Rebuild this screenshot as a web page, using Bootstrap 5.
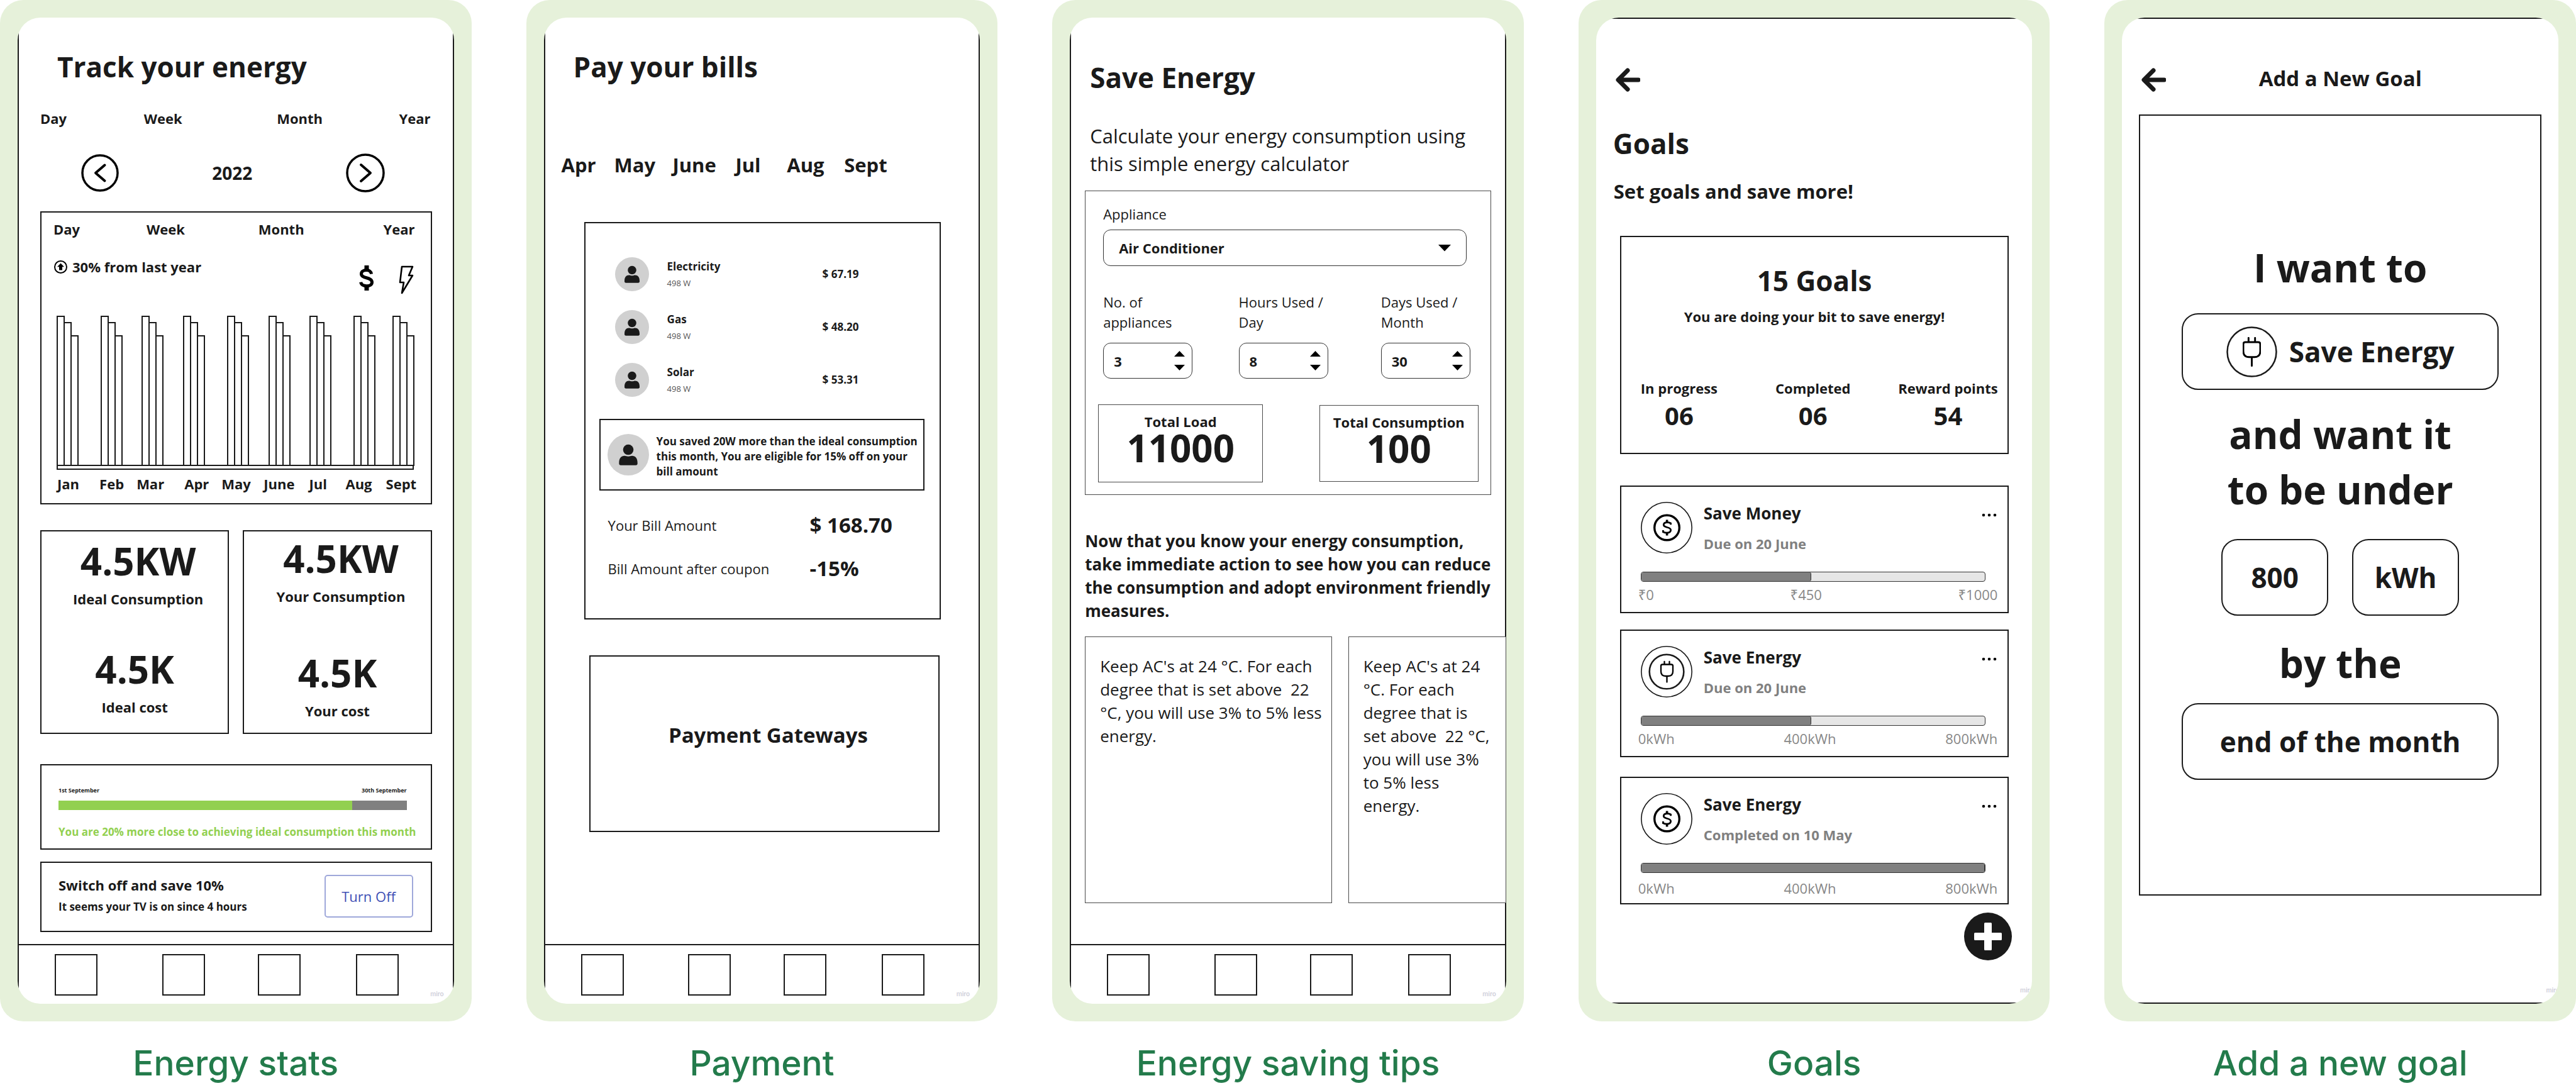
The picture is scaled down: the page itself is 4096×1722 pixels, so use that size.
<!DOCTYPE html>
<html lang="en">
<head>
<meta charset="utf-8">
<meta name="viewport" content="width=device-width, initial-scale=1">
<title>Energy app wireframes</title>
<link href="https://cdn.jsdelivr.net/npm/bootstrap@5.3.0/dist/css/bootstrap.min.css" rel="stylesheet">
<style>
  :root { --ink: #1a1a1a; --leaf: #92d050; --frame: #e6f1da; --brand: #237b4b; --mute: #808080; }
  body { font-family: "Open Sans", "Noto Sans", sans-serif; color: var(--ink); background: #fff; font-size: 22px; line-height: 32px; }
  a { color: inherit; text-decoration: none; }
  button { color: inherit; background: none; border: 0; padding: 0; }
  svg { display: block; flex: none; }

  /* board */
  .board { gap: 87px; }
  .phone-col { flex: 1 1 0; min-width: 0; margin: 0; }
  .phone { background: var(--frame); border-radius: 37px; padding: 28px; }
  .screen { background: #fff; border-radius: 36px; overflow: hidden; }
  .screen-sides { border-left: 2px solid var(--ink); border-right: 2px solid var(--ink); }
  .screen-ends { border-top: 2px solid var(--ink); border-bottom: 2px solid var(--ink); }
  .caption-text { font-family: Inter, sans-serif; font-weight: 500; font-size: 55px; line-height: 64px; color: var(--brand); margin-top: 34px; white-space: nowrap; }

  /* type scale */
  .t-62 { font-size: 62px; line-height: 88px; font-weight: 700; margin: 0; }
  .t-60 { font-size: 60px; line-height: 60px; font-weight: 700; }
  .t-44 { font-size: 44px; line-height: 60px; font-weight: 700; margin: 0; }
  .t-40 { font-size: 40px; line-height: 48px; font-weight: 700; }
  .t-33 { font-size: 33px; line-height: 44px; font-weight: 700; margin: 0; }
  .t-31 { font-size: 31px; line-height: 44px; margin: 0; }
  .t-28 { font-size: 28px; line-height: 40px; }
  .t-26 { font-size: 26px; line-height: 37px; margin: 0; }
  .t-22 { font-size: 22px; line-height: 32px; margin: 0; }
  .t-17 { font-size: 17px; line-height: 24px; margin: 0; }
  .t-13 { font-size: 13px; line-height: 20px; }
  .t-9 { font-size: 9px; line-height: 12px; }
  .nowrap { white-space: nowrap; }
  .muted { color: var(--mute); }
  .boxed { border: 2px solid var(--ink); background: #fff; }
  .boxed-thin { border: 1px solid #4a4a4a; background: #fff; }

  /* bottom tab bar */
  .tabbar { border-top: 2px solid var(--ink); padding: 14px 86px 13px 57px; display: grid; grid-template-columns: 171fr 152fr 156fr 68fr; position: relative; margin-top: auto; }
  .tabbar a { width: 68px; height: 66px; border: 2px solid var(--ink); display: block; }
  .stamp { position: absolute; right: 14px; bottom: 10px; font: 600 10px/12px Inter, sans-serif; color: #cfcfda; }
  .stamp-low { right: -2px; bottom: 14px; }

  /* energy stats */
  .stats-title { margin-top: 48px; padding-left: 61px; }
  .range-tabs { display: grid; grid-template-columns: 165fr 212fr 245fr; padding: 0 35px 0 34px; margin-top: 36px; }
  .pager { margin-top: 40px; padding: 0 108px 0 99px; }
  .chart-card { margin: 30px 33px 0 34px; padding: 10px 0 15px; }
  .chart-tabs { display: grid; grid-template-columns: 148fr 178fr 249fr; padding: 0 25px 0 19px; }
  .range-tabs > :last-child, .chart-tabs > :last-child { display: flex; justify-content: space-between; }
  .chart-head { margin-top: 28px; padding: 0 27px 0 20px; height: 60px; }
  .chart-head-icons { gap: 39px; padding-top: 14px; }
  .bars { display: grid; grid-template-columns: 70fr 65fr 66fr 70fr 66fr 65fr 70fr 62fr 34fr; height: 239px; margin: 34px 27px 0 24px; }
  .bar-group i { width: 13px; border: 2px solid var(--ink); margin-right: -2px; background: #fff; }
  .bars-base { height: 8px; margin: -2px 27px 0 24px; border: 2px solid var(--ink); }
  .bar-labels { display: grid; grid-template-columns: 67fr 59fr 76fr 59fr 67fr 72fr 58fr 64fr 50fr; margin: 6px 21px 0 25px; }
  .stat-pair { gap: 22px; margin: 41px 33px 0 34px; }
  .stat-tile { flex: 1 1 0; }
  .stat-tile .label-line { margin-top: 14px; }
  .stat-tile .top-pair { padding-left: 11px; }
  .tile-ideal { padding: 17px 0 25px; } .tile-ideal .low-pair { margin-top: 66px; }
  .tile-yours { padding: 13px 0 19px; } .tile-yours .low-pair { margin-top: 76px; }
  .month-card { margin: 48px 33px 0 34px; padding: 34px 38px 14px 27px; }
  .month-bar { height: 15px; margin-top: 10px; background: var(--mute); border-radius: 0; }
  .month-bar .progress-bar { background: var(--leaf); }
  .month-note { color: var(--leaf); margin-top: 23px; }
  .switch-card { margin: 19px 33px 18px 34px; padding: 19px 28px 21px 27px; }
  .switch-card .t-17 { margin-top: 7px; }
  .btn-off { width: 141px; height: 68px; border: 2px solid #9fa8da; border-radius: 5px; color: #4050b5; font-size: 22px; }

  /* payment */
  .pay-title { margin-top: 48px; padding-left: 45px; }
  .month-tabs { display: grid; grid-template-columns: 84fr 93fr 100fr 82fr 91fr 70fr; margin: 104px 144px 0 26px; }
  .bill-card { margin: 69px 60px 0 62px; padding: 54px 0 57px; }
  .bill-list { padding-left: 47px; gap: 30px; }
  .bill-item { gap: 29px; }
  .bill-name { width: 247px; }
  .bill-name .t-13 { margin-top: 4px; color: #555; }
  .saved-note { margin: 35px 24px 0 22px; height: 114px; padding-left: 11px; gap: 12px; }
  .saved-note p { padding-top: 6px; }
  .bill-total { padding-left: 36px; }
  .bill-due { margin-top: 33px; }
  .bill-after { margin-top: 25px; }
  .bill-total dt { width: 321px; font-weight: 400; }
  .gateway-card { margin: 57px 62px 0 70px; height: 281px; padding: 0 0 27px 12px; }

  /* saving tips */
  .tips-title { margin-top: 65px; padding-left: 30px; }
  .tips-intro { margin-top: 41px; padding-left: 30px; }
  .calc-card { margin: 21px 22px 0; padding: 20px 0 19px; }
  .calc-fields { padding: 0 32px 0 28px; }
  .pick { position: relative; margin: 9px 6px 0 0; }
  .pick select { appearance: none; width: 100%; height: 58px; border: 1px solid #333; border-radius: 12px; background: #fff; color: var(--ink); font-weight: 700; padding: 0 20px 0 24px; }
  .pick svg { position: absolute; right: 25px; top: 24px; pointer-events: none; }
  .count-grid { display: grid; grid-template-columns: 216fr 227fr 142fr; margin-top: 41px; }
  .count-box { width: 142px; height: 57px; margin-top: 17px; border: 1px solid #333; border-radius: 12px; padding: 0 11px 0 16px; }
  .count-box input { appearance: textfield; -moz-appearance: textfield; border: 0; outline: 0; padding: 0; width: 60px; font-weight: 700; color: var(--ink); background: none; }
  .count-box input::-webkit-inner-spin-button { appearance: none; margin: 0; }
  .totals { margin-top: 41px; padding: 0 19px 0 20px; }
  .total-box { width: 262px; padding: 10px 0 28px; }
  .total-box + .total-box { width: 253px; padding-bottom: 26px; }
  .total-box .t-60 { line-height: 52px; }
  .tips-call { margin-top: 55px; padding-left: 22px; }
  .tip-row { gap: 26px; margin: 22px -2px 0 22px; }
  .tip-card { flex: 355 1 0; height: 424px; padding: 28px 14px 0 23px; }
  .tip-card + .tip-card { flex-grow: 205; padding-right: 22px; }

  /* goals */
  .back-link { display: block; width: 39px; }
  .goals-back { margin: 78px 0 0 31px; }
  .goals-title { margin-top: 52px; padding-left: 27px; }
  .goals-sub { margin-top: 24px; padding-left: 28px; }
  .goals-card { margin: 49px 37px 0 38px; padding: 39px 0 35px; }
  .goals-card > .t-22 { margin-top: 11px; }
  .goal-counts { display: grid; grid-template-columns: 214fr 195fr 160fr; justify-items: start; margin-top: 82px; padding: 0 14px 0 31px; }
  .goal-counts .t-40 { margin-top: 4px; }
  .goal-item { margin: 26px 37px 0 38px; padding: 24px 0 12px; }
  .goal-item.first-goal { margin-top: 50px; }
  .goal-item.done-goal { margin-top: 31px; padding-bottom: 8px; }
  .goal-head { gap: 18px; padding: 0 17px 0 31px; }
  .goal-head .due-line { margin-top: 13px; }
  .goal-more { margin-top: 18px; }
  .goal-bar { height: 16px; margin: 29px 35px 0 31px; background: #e6e6e6; border: 1px solid #333; border-radius: 4px; }
  .goal-bar .progress-bar { background: var(--mute); border-right: 1px solid #333; border-radius: 0 3px 3px 0; }
  .goal-scale { margin-top: 4px; padding: 0 16px 0 27px; color: #888; }
  .done-goal .goal-scale { margin-top: 8px; }
  .fab { margin: 13px 32px 0 auto; }

  /* new goal */
  .new-head { margin-top: 73px; padding: 0 70px 0 31px; }
  .new-head h2 { padding-bottom: 4px; }
  .new-card { margin: 31px 27px 0; padding: 197px 66px 182px; }
  .pill { height: 122px; border: 2px solid var(--ink); border-radius: 26px; background: #fff; width: 100%; color: var(--ink); }
  .pill-kind { margin-top: 29px; gap: 19px; }
  .limit-text { margin-top: 26px; }
  .limit-row { margin-top: 35px; gap: 38px; }
  .limit-row .pill { width: 170px; }
  .by-text { margin-top: 31px; }
  .pill-when { margin-top: 20px; }
</style>
</head>
<body>
<svg width="0" height="0" class="position-absolute" aria-hidden="true">
  <symbol id="person" viewBox="0 0 54 54">
    <circle cx="27" cy="27" r="27" fill="#d0d0d0"/>
    <circle cx="27" cy="20.500" r="6.800" fill="#1a1a1a"/>
    <path d="M15 37.500c0-6 3-9 7-9 2 0 3 .8 5 .8s3-.8 5-.8c4 0 7 3 7 9v1c0 1.400-.8 2.200-2.200 2.200H17.200c-1.400 0-2.200-.8-2.200-2.200z" fill="#1a1a1a"/>
  </symbol>
  <symbol id="back" viewBox="0 0 39 38">
    <path d="M19 4L4 19l15 15M4.500 19H36" fill="none" stroke="#1a1a1a" stroke-width="7" stroke-linecap="round" stroke-linejoin="round"/>
  </symbol>
  <symbol id="plug" viewBox="0 0 28 46">
    <path d="M4 8h20q3 0 3 3v11q0 9-9 9h-8q-9 0-9-9V11q0-3 3-3zM9 1.500v6.500M19 1.500v6.500M14 31v13.500" fill="none" stroke="#000" stroke-width="2.800" stroke-linecap="round" stroke-linejoin="round"/>
  </symbol>
  <symbol id="coin" viewBox="0 0 82 82">
    <circle cx="41" cy="41" r="40.200" fill="#fff" stroke="#1a1a1a" stroke-width="1.600"/>
    <circle cx="41.500" cy="41" r="19.800" fill="none" stroke="#000" stroke-width="3.400"/>
    <path d="M47.600 36.200V34c-1.800-.9-3.600-1.300-5.600-1.300-3.700 0-5.700 1.500-5.700 3.900 0 5.200 11.300 2.600 11.300 8.200 0 2.700-2.200 4.400-6.200 4.400-2.200 0-4.300-.5-6-1.400V45" fill="none" stroke="#000" stroke-width="2.800"/>
    <path d="M39.800 28.500h3.600v4h-3.600zM39.800 49.500h3.600v4h-3.600z"/>
  </symbol>
  <symbol id="plugcoin" viewBox="0 0 82 82">
    <circle cx="41" cy="41" r="40.200" fill="#fff" stroke="#1a1a1a" stroke-width="1.600"/>
    <circle cx="41" cy="41" r="27.300" fill="none" stroke="#1a1a1a" stroke-width="2.600"/>
    <path d="M34.500 29.500h14q2.500 0 2.500 2.500v8.500q0 7.500-7.500 7.500h-4q-7.500 0-7.500-7.500V32q0-2.500 2.500-2.500zM37.500 25v4M45.500 25v4M41.500 48v9.500" fill="none" stroke="#000" stroke-width="2.300" stroke-linecap="round"/>
  </symbol>
  <symbol id="dots" viewBox="0 0 24 6">
    <circle cx="3" cy="3" r="2.300"/><circle cx="12" cy="3" r="2.300"/><circle cx="21" cy="3" r="2.300"/>
  </symbol>
  <symbol id="steps" viewBox="0 0 17 32">
    <path d="M8.500 0L17 9H0zM0 22h17l-8.500 9z" fill="#000"/>
  </symbol>
</svg>

<main class="board d-flex min-vh-100">

  <!-- Energy stats -->
  <figure class="phone-col d-flex flex-column">
    <div class="phone flex-grow-1 d-flex flex-column">
      <div class="screen flex-grow-1 d-flex flex-column">
        <section class="screen-sides flex-grow-1 d-flex flex-column">
          <h2 class="t-44 stats-title">Track your energy</h2>
          <nav class="range-tabs fw-bold" aria-label="Range">
            <a href="#">Day</a><a href="#">Week</a><span><a href="#">Month</a><a href="#">Year</a></span>
          </nav>
          <div class="pager d-flex justify-content-between align-items-center">
            <button type="button" aria-label="Previous year"><svg width="60" height="60" viewBox="0 0 60 60"><circle cx="30" cy="30" r="28" fill="none" stroke="#000" stroke-width="3.500"/><path d="M37.500 17.500L23 30l14.500 12.500" fill="none" stroke="#000" stroke-width="4" stroke-linecap="round" stroke-linejoin="round"/></svg></button>
            <span class="t-28 fw-bold">2022</span>
            <button type="button" aria-label="Next year"><svg width="62" height="62" viewBox="0 0 62 62"><circle cx="31" cy="31" r="29" fill="none" stroke="#000" stroke-width="3.500"/><path d="M24 18l15 13-15 13" fill="none" stroke="#000" stroke-width="4" stroke-linecap="round" stroke-linejoin="round"/></svg></button>
          </div>
          <div class="boxed chart-card">
            <nav class="chart-tabs fw-bold" aria-label="Chart range">
              <a href="#">Day</a><a href="#">Week</a><span><a href="#">Month</a><a href="#">Year</a></span>
            </nav>
            <div class="chart-head d-flex justify-content-between align-items-start">
              <div class="d-flex align-items-center gap-2">
                <svg width="21" height="21" viewBox="0 0 21 21"><circle cx="10.500" cy="10.500" r="9.500" fill="none" stroke="#000" stroke-width="2"/><path d="M10.500 4.500l5.500 5.700h-3v5.300H8v-5.300H5z"/></svg>
                <strong>30% from last year</strong>
              </div>
              <div class="chart-head-icons d-flex">
                <svg width="24" height="40" viewBox="0 0 24 40"><path d="M19.600 13.600C19 10 16 7.600 12 7.600c-5 0-8.500 2.200-8.500 5.900C3.500 21.500 20.500 18 20.500 26.700c0 3.800-3.500 6-8.500 6s-8.800-2.300-9.300-6" fill="none" stroke="#000" stroke-width="5"/><path d="M8.500 0h7v7h-7zM8.500 33h7v7h-7z"/></svg>
                <svg width="24" height="46" viewBox="0 0 24 46"><path d="M5 2h17l-6 14h6L5 44l3-17H2z" fill="none" stroke="#000" stroke-width="2.600" stroke-linejoin="round"/></svg>
              </div>
            </div>
            <div class="bars" role="img" aria-label="Monthly energy use">
              <div class="bar-group d-flex align-items-end"><i style="height:100%"></i><i style="height:96%"></i><i style="height:87%"></i></div>
              <div class="bar-group d-flex align-items-end"><i style="height:100%"></i><i style="height:96%"></i><i style="height:87%"></i></div>
              <div class="bar-group d-flex align-items-end"><i style="height:100%"></i><i style="height:96%"></i><i style="height:87%"></i></div>
              <div class="bar-group d-flex align-items-end"><i style="height:100%"></i><i style="height:96%"></i><i style="height:87%"></i></div>
              <div class="bar-group d-flex align-items-end"><i style="height:100%"></i><i style="height:96%"></i><i style="height:87%"></i></div>
              <div class="bar-group d-flex align-items-end"><i style="height:100%"></i><i style="height:96%"></i><i style="height:87%"></i></div>
              <div class="bar-group d-flex align-items-end"><i style="height:100%"></i><i style="height:96%"></i><i style="height:87%"></i></div>
              <div class="bar-group d-flex align-items-end"><i style="height:100%"></i><i style="height:96%"></i><i style="height:87%"></i></div>
              <div class="bar-group d-flex align-items-end"><i style="height:100%"></i><i style="height:96%"></i><i style="height:87%"></i></div>
            </div>
            <div class="bars-base"></div>
            <div class="bar-labels fw-bold">
              <span>Jan</span><span>Feb</span><span>Mar</span><span>Apr</span><span>May</span><span>June</span><span>Jul</span><span>Aug</span><span>Sept</span>
            </div>
          </div>
          <div class="stat-pair d-flex text-center fw-bold">
            <div class="boxed stat-tile tile-ideal">
              <div class="top-pair"><div class="t-60">4.5KW</div><div class="label-line">Ideal Consumption</div></div>
              <div class="low-pair"><div class="t-60">4.5K</div><div class="label-line">Ideal cost</div></div>
            </div>
            <div class="boxed stat-tile tile-yours">
              <div class="top-pair"><div class="t-60">4.5KW</div><div class="label-line">Your Consumption</div></div>
              <div class="low-pair"><div class="t-60">4.5K</div><div class="label-line">Your cost</div></div>
            </div>
          </div>
          <div class="boxed month-card">
            <div class="d-flex justify-content-between t-9 fw-bold"><span>1st September</span><span>30th September</span></div>
            <div class="progress month-bar" role="progressbar" aria-label="Month progress" aria-valuenow="84" aria-valuemin="0" aria-valuemax="100"><div class="progress-bar" style="width:84.3%"></div></div>
            <p class="t-17 fw-bold month-note nowrap">You are 20% more close to achieving ideal consumption this month</p>
          </div>
          <div class="boxed switch-card d-flex justify-content-between align-items-start">
            <div class="fw-bold"><div>Switch off and save 10%</div><div class="t-17">It seems your TV is on since 4 hours</div></div>
            <button type="button" class="btn-off">Turn Off</button>
          </div>
          <nav class="tabbar" aria-label="Main"><a href="#" aria-label="Tab 1"></a><a href="#" aria-label="Tab 2"></a><a href="#" aria-label="Tab 3"></a><a href="#" aria-label="Tab 4"></a><span class="stamp">miro</span></nav>
        </section>
      </div>
    </div>
    <figcaption class="caption-text text-center">Energy stats</figcaption>
  </figure>

  <!-- Payment -->
  <figure class="phone-col d-flex flex-column">
    <div class="phone flex-grow-1 d-flex flex-column">
      <div class="screen flex-grow-1 d-flex flex-column">
        <section class="screen-sides flex-grow-1 d-flex flex-column">
          <h2 class="t-44 pay-title">Pay your bills</h2>
          <nav class="month-tabs t-31 fw-bold" aria-label="Month">
            <a href="#">Apr</a><a href="#">May</a><a href="#">June</a><a href="#">Jul</a><a href="#">Aug</a><a href="#">Sept</a>
          </nav>
          <div class="boxed bill-card">
            <div class="bill-list d-flex flex-column">
              <div class="bill-item d-flex align-items-center"><svg width="54" height="54"><use href="#person"/></svg><div class="d-flex align-items-center"><div class="bill-name"><div class="t-17 fw-bold">Electricity</div><div class="t-13">498 W</div></div><strong class="t-17">$ 67.19</strong></div></div>
              <div class="bill-item d-flex align-items-center"><svg width="54" height="54"><use href="#person"/></svg><div class="d-flex align-items-center"><div class="bill-name"><div class="t-17 fw-bold">Gas</div><div class="t-13">498 W</div></div><strong class="t-17">$ 48.20</strong></div></div>
              <div class="bill-item d-flex align-items-center"><svg width="54" height="54"><use href="#person"/></svg><div class="d-flex align-items-center"><div class="bill-name"><div class="t-17 fw-bold">Solar</div><div class="t-13">498 W</div></div><strong class="t-17">$ 53.31</strong></div></div>
            </div>
            <div class="boxed saved-note d-flex align-items-center">
              <svg width="66" height="66"><use href="#person"/></svg>
              <p class="t-17 fw-bold nowrap">You saved 20W more than the ideal consumption<br>this month, You are eligible for 15% off on your<br>bill amount</p>
            </div>
            <dl class="mb-0">
              <div class="bill-total bill-due d-flex align-items-center"><dt>Your Bill Amount</dt><dd class="t-33">$ 168.70</dd></div>
              <div class="bill-total bill-after d-flex align-items-center"><dt>Bill Amount after coupon</dt><dd class="t-33">-15%</dd></div>
            </dl>
          </div>
          <div class="boxed gateway-card d-flex align-items-center justify-content-center"><h3 class="t-33">Payment Gateways</h3></div>
          <nav class="tabbar" aria-label="Main"><a href="#" aria-label="Tab 1"></a><a href="#" aria-label="Tab 2"></a><a href="#" aria-label="Tab 3"></a><a href="#" aria-label="Tab 4"></a><span class="stamp">miro</span></nav>
        </section>
      </div>
    </div>
    <figcaption class="caption-text text-center">Payment</figcaption>
  </figure>

  <!-- Energy saving tips -->
  <figure class="phone-col d-flex flex-column">
    <div class="phone flex-grow-1 d-flex flex-column">
      <div class="screen flex-grow-1 d-flex flex-column">
        <section class="screen-sides flex-grow-1 d-flex flex-column">
          <h2 class="t-44 tips-title">Save Energy</h2>
          <p class="t-31 tips-intro nowrap">Calculate your energy consumption using<br>this simple energy calculator</p>
          <form class="boxed-thin calc-card">
            <div class="calc-fields">
              <label for="appliance" class="d-block">Appliance</label>
              <div class="pick"><select id="appliance"><option>Air Conditioner</option></select><svg width="20" height="11" viewBox="0 0 20 11"><path d="M0 0h20L10 10.500z"/></svg></div>
              <div class="count-grid">
                <div><label for="num" class="d-block">No. of<br>appliances</label><div class="count-box d-flex align-items-center justify-content-between"><input id="num" type="number" value="3"><svg width="17" height="32"><use href="#steps"/></svg></div></div>
                <div><label for="hrs" class="d-block">Hours Used /<br>Day</label><div class="count-box d-flex align-items-center justify-content-between"><input id="hrs" type="number" value="8"><svg width="17" height="32"><use href="#steps"/></svg></div></div>
                <div><label for="dys" class="d-block">Days Used /<br>Month</label><div class="count-box d-flex align-items-center justify-content-between"><input id="dys" type="number" value="30"><svg width="17" height="32"><use href="#steps"/></svg></div></div>
              </div>
            </div>
            <div class="totals d-flex justify-content-between align-items-center text-center fw-bold">
              <div class="boxed-thin total-box"><div>Total Load</div><div class="t-60">11000</div></div>
              <div class="boxed-thin total-box"><div>Total Consumption</div><div class="t-60">100</div></div>
            </div>
          </form>
          <p class="t-26 fw-bold tips-call nowrap">Now that you know your energy consumption,<br>take immediate action to see how you can reduce<br>the consumption and adopt environment friendly<br>measures.</p>
          <div class="tip-row d-flex">
            <div class="boxed-thin tip-card t-26">Keep AC's at 24 °C. For each degree that is set above&nbsp; 22 °C, you will use 3% to 5% less energy.</div>
            <div class="boxed-thin tip-card t-26">Keep AC's at 24 °C. For each degree that is set above&nbsp; 22 °C, you will use 3% to 5% less energy.</div>
          </div>
          <nav class="tabbar" aria-label="Main"><a href="#" aria-label="Tab 1"></a><a href="#" aria-label="Tab 2"></a><a href="#" aria-label="Tab 3"></a><a href="#" aria-label="Tab 4"></a><span class="stamp">miro</span></nav>
        </section>
      </div>
    </div>
    <figcaption class="caption-text text-center">Energy saving tips</figcaption>
  </figure>

  <!-- Goals -->
  <figure class="phone-col d-flex flex-column">
    <div class="phone flex-grow-1 d-flex flex-column">
      <div class="screen flex-grow-1 d-flex flex-column">
        <section class="screen-ends flex-grow-1 d-flex flex-column position-relative">
          <a href="#" class="back-link goals-back" aria-label="Back"><svg width="39" height="38"><use href="#back"/></svg></a>
          <h2 class="t-44 goals-title">Goals</h2>
          <p class="t-31 fw-bold goals-sub">Set goals and save more!</p>
          <div class="boxed goals-card text-center fw-bold">
            <div class="t-44">15 Goals</div>
            <p class="t-22">You are doing your bit to save energy!</p>
            <div class="goal-counts">
              <div><div>In progress</div><div class="t-40">06</div></div>
              <div><div>Completed</div><div class="t-40">06</div></div>
              <div><div>Reward points</div><div class="t-40">54</div></div>
            </div>
          </div>
          <article class="boxed goal-item first-goal">
            <div class="goal-head d-flex align-items-start"><svg width="82" height="82"><use href="#coin"/></svg><div class="flex-grow-1 fw-bold"><h3 class="t-26 fw-bold">Save Money</h3><div class="muted due-line">Due on 20 June</div></div><button type="button" class="goal-more" aria-label="More"><svg width="24" height="6"><use href="#dots"/></svg></button></div>
            <div class="progress goal-bar" role="progressbar" aria-label="Save Money" aria-valuenow="450" aria-valuemin="0" aria-valuemax="1000"><div class="progress-bar" style="width:49.5%"></div></div>
            <div class="goal-scale d-flex justify-content-between"><span>₹0</span><span>₹450</span><span>₹1000</span></div>
          </article>
          <article class="boxed goal-item">
            <div class="goal-head d-flex align-items-start"><svg width="82" height="82"><use href="#plugcoin"/></svg><div class="flex-grow-1 fw-bold"><h3 class="t-26 fw-bold">Save Energy</h3><div class="muted due-line">Due on 20 June</div></div><button type="button" class="goal-more" aria-label="More"><svg width="24" height="6"><use href="#dots"/></svg></button></div>
            <div class="progress goal-bar" role="progressbar" aria-label="Save Energy" aria-valuenow="400" aria-valuemin="0" aria-valuemax="800"><div class="progress-bar" style="width:49.5%"></div></div>
            <div class="goal-scale d-flex justify-content-between"><span>0kWh</span><span>400kWh</span><span>800kWh</span></div>
          </article>
          <article class="boxed goal-item done-goal">
            <div class="goal-head d-flex align-items-start"><svg width="82" height="82"><use href="#coin"/></svg><div class="flex-grow-1 fw-bold"><h3 class="t-26 fw-bold">Save Energy</h3><div class="muted due-line">Completed on 10 May</div></div><button type="button" class="goal-more" aria-label="More"><svg width="24" height="6"><use href="#dots"/></svg></button></div>
            <div class="progress goal-bar" role="progressbar" aria-label="Save Energy" aria-valuenow="800" aria-valuemin="0" aria-valuemax="800"><div class="progress-bar" style="width:100%"></div></div>
            <div class="goal-scale d-flex justify-content-between"><span>0kWh</span><span>400kWh</span><span>800kWh</span></div>
          </article>
          <button type="button" class="fab" aria-label="Add goal"><svg width="76" height="76" viewBox="0 0 76 76"><circle cx="38" cy="38" r="38" fill="#1a1a1a"/><path d="M33.500 16h9q1.500 0 1.500 1.500V32h14.500q1.500 0 1.500 1.500v9q0 1.500-1.500 1.500H44v14.500q0 1.500-1.500 1.500h-9q-1.500 0-1.500-1.500V44H17.500q-1.500 0-1.500-1.500v-9q0-1.500 1.500-1.500H32V17.500q0-1.500 1.500-1.500z" fill="#fff"/></svg></button>
          <span class="stamp stamp-low">miro</span>
        </section>
      </div>
    </div>
    <figcaption class="caption-text text-center">Goals</figcaption>
  </figure>

  <!-- Add a new goal -->
  <figure class="phone-col d-flex flex-column">
    <div class="phone flex-grow-1 d-flex flex-column">
      <div class="screen flex-grow-1 d-flex flex-column">
        <section class="screen-ends flex-grow-1 d-flex flex-column position-relative">
          <div class="new-head d-flex align-items-center">
            <a href="#" class="back-link" aria-label="Back"><svg width="39" height="38"><use href="#back"/></svg></a>
            <h2 class="t-33 flex-grow-1 text-center">Add a New Goal</h2>
          </div>
          <form class="boxed new-card text-center">
            <p class="t-62">I want to</p>
            <button type="button" class="pill pill-kind t-44 d-flex align-items-center justify-content-center"><svg width="81" height="81" viewBox="0 0 81 81"><circle cx="40.500" cy="40.500" r="39" fill="none" stroke="#1a1a1a" stroke-width="2.500"/><svg x="26" y="16.500" width="29" height="48"><use href="#plug"/></svg></svg>Save Energy</button>
            <p class="t-62 limit-text">and want it<br>to be under</p>
            <div class="limit-row d-flex justify-content-center">
              <input type="text" class="pill t-44 text-center" value="800" aria-label="Amount">
              <button type="button" class="pill t-44">kWh</button>
            </div>
            <p class="t-62 by-text">by the</p>
            <button type="button" class="pill pill-when t-44">end of the month</button>
          </form>
          <span class="stamp stamp-low">miro</span>
        </section>
      </div>
    </div>
    <figcaption class="caption-text text-center">Add a new goal</figcaption>
  </figure>
</main>
<script src="https://cdn.jsdelivr.net/npm/bootstrap@5.3.0/dist/js/bootstrap.bundle.min.js"></script>
</body>
</html>
